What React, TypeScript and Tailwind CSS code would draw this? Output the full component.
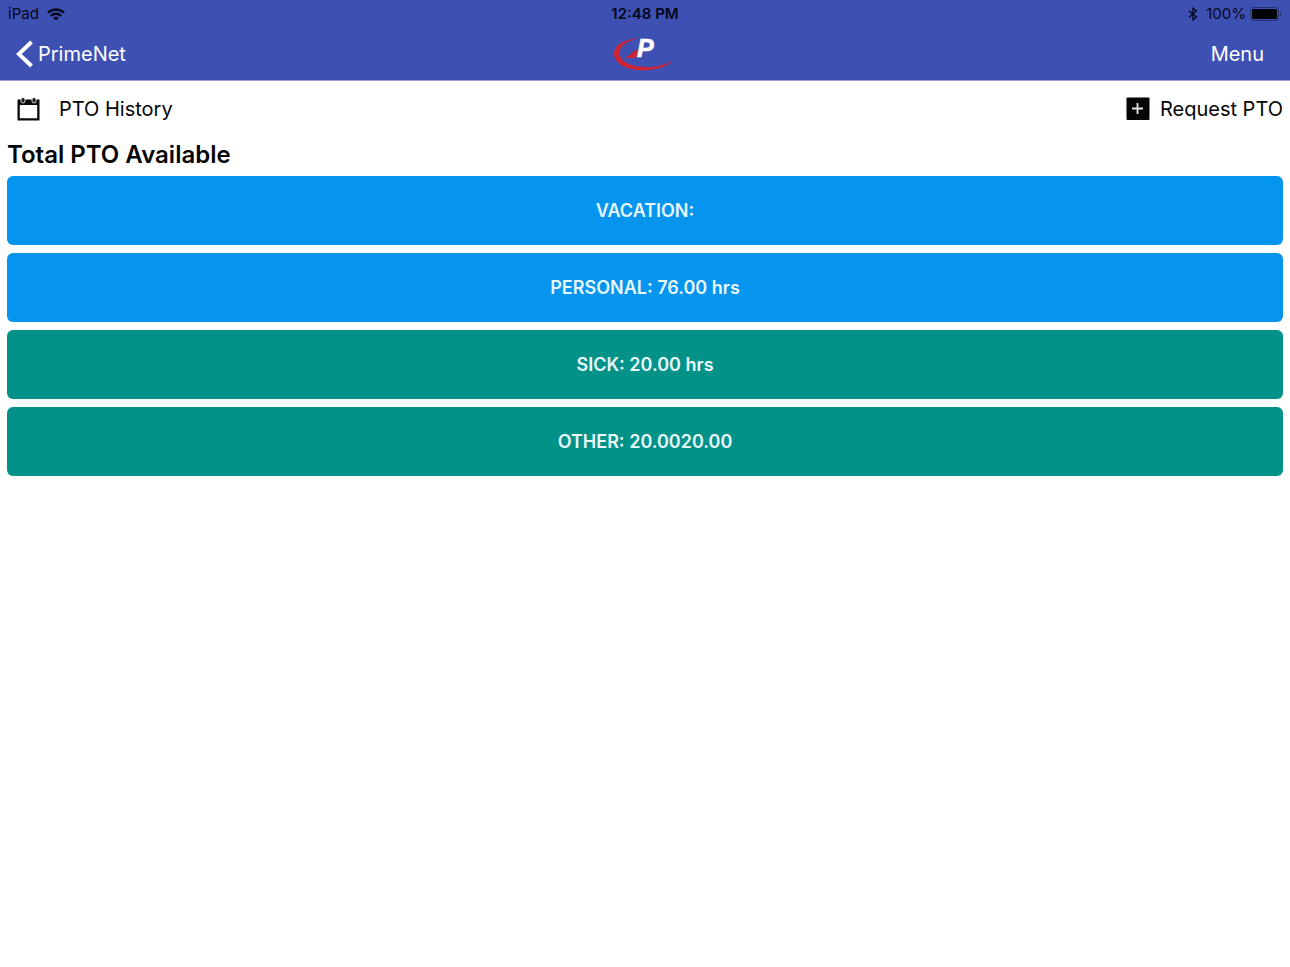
import { clsx } from "clsx";

type Balance = { label: string; value: string; color: string };

const balances: Balance[] = [
    { label: "VACATION:", value: "", color: "bg-[#0594ee]" },
    { label: "PERSONAL:", value: "76.00 hrs", color: "bg-[#0594ee]" },
    { label: "SICK:", value: "20.00 hrs", color: "bg-[#039287]" },
    { label: "OTHER:", value: "20.0020.00", color: "bg-[#039287]" },
];

function WifiIcon() {
    return (
        <svg width="18" height="13" viewBox="0 0 18 13" fill="none" stroke="#05071a" strokeWidth="2.4" aria-hidden="true">
            <path d="M1 4.7C5.4 0.4 12.6 0.4 17 4.7" />
            <path d="M4 7.9C6.8 5.1 11.2 5.1 14 7.9" />
            <path d="M9 12.6 6.3 9.9C7.8 8.5 10.2 8.5 11.7 9.9Z" fill="#05071a" stroke="none" />
        </svg>
    );
}

function BluetoothIcon() {
    return (
        <svg width="10" height="14" viewBox="0 0 10 14" fill="none" stroke="#05071a" strokeWidth="1.3" aria-hidden="true">
            <path d="M1 3.8 8.4 10 5 12.8V1.2L8.4 4 1 10.2" />
        </svg>
    );
}

function BatteryIcon() {
    return (
        <svg width="32" height="14" viewBox="0 0 32 14" aria-hidden="true">
            <rect x="0.5" y="0.5" width="28" height="13" rx="3" fill="none" stroke="#262f70" />
            <rect x="2" y="2" width="25" height="10" rx="1.5" fill="#000" />
            <path d="M30 5C31.6 5.4 31.6 8.6 30 9Z" fill="#262f70" />
        </svg>
    );
}

function Logo() {
    return (
        <svg width="64" height="44" viewBox="0 -4 64 44" role="img" aria-label="PrimeNet">
            <path
                d="M27 2.5C13 3 2 9 2 17.5C2 27 14 34.3 31 34.3C45 34.3 56 30 61 24.3C54 29 44 31.4 33 31C18 30.5 7.5 25 7.5 17C7.5 10 15 4.5 27 2.5Z"
                fill="#cf2434"
            />
            <path d="M26.5 12 24 22H13.5Z" fill="#cf2434" />
            <text x="25" y="21" fill="#fff" stroke="#fff" strokeWidth="0.6" fontFamily="Liberation Sans, sans-serif" fontSize="25" fontWeight="700" fontStyle="italic">
                P
            </text>
        </svg>
    );
}

function CalendarIcon() {
    return (
        <svg width="24" height="24" viewBox="0 0 24 24" aria-hidden="true">
            <path fillRule="evenodd" d="M0.5 2.5H22.5V23.5H0.5ZM2.8 8V21.3H20.2V8Z" fill="#0a0a0a" />
            <rect x="4" y="0.5" width="4" height="5.5" rx="2" fill="#1c1c1c" stroke="#fff" strokeWidth="0.8" />
            <rect x="15" y="0.5" width="4" height="5.5" rx="2" fill="#1c1c1c" stroke="#fff" strokeWidth="0.8" />
        </svg>
    );
}

function AddIcon() {
    return (
        <svg width="24" height="24" viewBox="0 0 24 24" aria-hidden="true">
            <rect x="0.5" y="0.5" width="23" height="22.5" rx="1" fill="#050505" />
            <path d="M6 11.5H17M11.5 6V17" stroke="#e4e4e4" strokeWidth="1.8" />
        </svg>
    );
}

export default function App() {
    return (
        <div className="min-h-screen bg-white font-['Inter','Liberation_Sans',sans-serif] text-[#050505]">
            <header className="border-b border-[#9ba3d3] bg-[#3f50b3]">
                <div className="grid grid-cols-3 items-center px-2 pt-1 text-[15px] leading-5 text-[#05071a]">
                    <div className="flex items-center gap-2">
                        <span>iPad</span>
                        <WifiIcon />
                    </div>
                    <span className="text-center font-semibold">12:48 PM</span>
                    <div className="flex items-center justify-end gap-1">
                        <BluetoothIcon />
                        <span className="pl-1">100%</span>
                        <BatteryIcon />
                    </div>
                </div>
                <nav className="grid grid-cols-3 items-center pt-2 pr-[26px] pb-1 pl-4 text-xl text-white">
                    <a href="#home" className="flex items-center gap-1">
                        <svg width="18" height="28" viewBox="0 0 18 28" fill="none" stroke="currentColor" strokeWidth="4" aria-hidden="true">
                            <path d="M15.5 2 2.8 14 15.5 26" />
                        </svg>
                        PrimeNet
                    </a>
                    <div className="flex justify-center pl-2">
                        <Logo />
                    </div>
                    <button type="button" className="justify-self-end">Menu</button>
                </nav>
            </header>
            <main className="px-[7px]">
                <div className="flex h-14 items-center justify-between text-xl">
                    <a href="#history" className="flex items-center gap-[18px] pl-[10px]">
                        <CalendarIcon />
                        PTO History
                    </a>
                    <a href="#request" className="flex items-center gap-[10px]">
                        <AddIcon />
                        Request PTO
                    </a>
                </div>
                <h1 className="pb-[3px] text-2xl leading-9 font-semibold">Total PTO Available</h1>
                <div className="flex flex-col gap-2">
                    {balances.map((balance) => (
                        <button
                            key={balance.label}
                            type="button"
                            className={clsx("h-[69px] rounded-md text-lg font-semibold text-[#e8f7fc]", balance.color)}
                        >
                            {balance.label} {balance.value}
                        </button>
                    ))}
                </div>
            </main>
        </div>
    );
}
